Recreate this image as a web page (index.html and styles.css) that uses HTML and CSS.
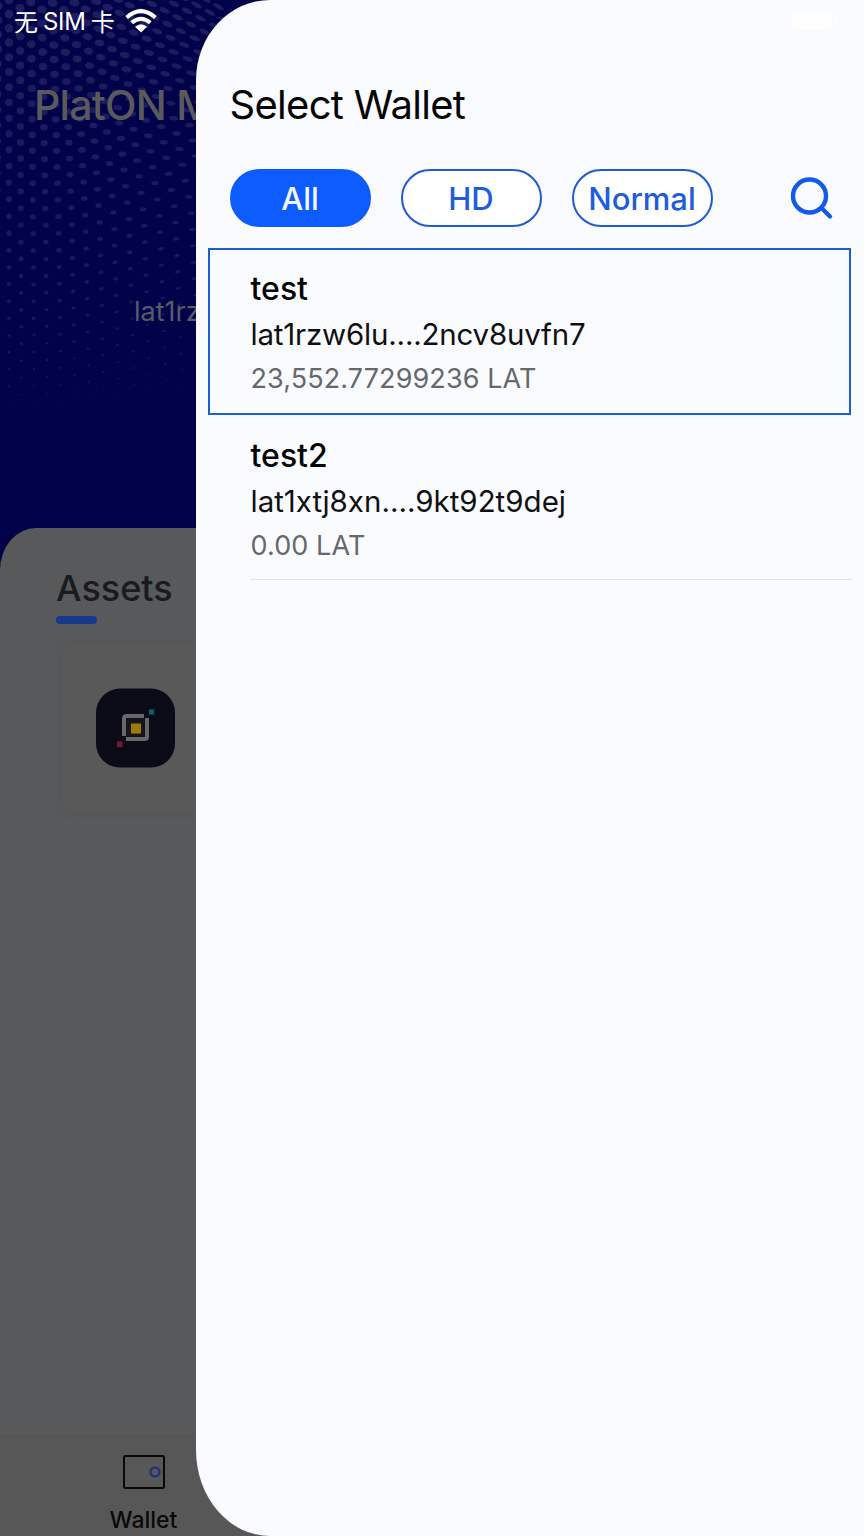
FILE: index.html
```html
<!DOCTYPE html>
<html lang="en">
<head>
<meta charset="utf-8">
<title>Select Wallet</title>
<link rel="stylesheet" href="styles.css">
</head>
<body>
<div class="phone">
  <main class="home">
    <header class="hero">
      <svg class="dots" id="dots" width="300" height="440" viewBox="0 0 300 440"></svg>
      <h1 class="network">PlatON M</h1>
      <p class="address">lat1rz</p>
    </header>
    <section class="assets">
      <h2 class="assets-title">Assets</h2>
      <div class="underline"></div>
      <div class="asset-card">
        <svg width="80" height="80" viewBox="0 0 80 80">
          <rect y=".6" width="79" height="79" rx="24" fill="#0a0b17"/>
          <path d="M28 48V30.500Q28 28 30.500 28H48" fill="none" stroke="#68686c" stroke-width="4"/>
          <path d="M51 30V48.500Q51 51 48.500 51H30" fill="none" stroke="#68686c" stroke-width="4"/>
          <rect x="30.500" y="30.500" width="18" height="18" fill="#171618"/>
          <rect x="35" y="35.500" width="10" height="10" fill="#9c7a0d"/>
          <rect x="53" y="21.500" width="5" height="5" fill="#08656e"/>
          <rect x="21" y="53.500" width="5.500" height="5.500" fill="#761938"/>
        </svg>
      </div>
    </section>
    <nav class="tabs">
      <div class="tab">
        <svg width="42" height="34" viewBox="0 0 42 34" fill="none">
          <rect x="1" y="1" width="40" height="32" rx="1.500" stroke="#080808" stroke-width="2"/>
          <circle cx="32" cy="17" r="4.500" stroke="#202c83" stroke-width="2.200"/>
        </svg>
        <span>Wallet</span>
      </div>
    </nav>
  </main>

  <aside class="drawer">
    <h2 class="title">Select Wallet</h2>
    <div class="filters">
      <button class="pill active">All</button>
      <button class="pill">HD</button>
      <button class="pill normal">Normal</button>
      <svg class="search" width="44" height="44" viewBox="0 0 44 44" fill="none" stroke="#1459e8" stroke-width="4.400" stroke-linecap="round">
        <circle cx="19.500" cy="20" r="16.500"/>
        <path d="M31.500 32L40 40.500"/>
      </svg>
    </div>
    <article class="wallet selected">
      <h3>test</h3>
      <p class="addr">lat1rzw6lu....2ncv8uvfn7</p>
      <p class="balance">23,552.77299236 LAT</p>
    </article>
    <article class="wallet">
      <h3>test2</h3>
      <p class="addr second">lat1xtj8xn....9kt92t9dej</p>
      <p class="balance">0.00 LAT</p>
    </article>
  </aside>

  <div class="status">
    <span class="carrier"><span class="cjk">无</span><span class="sim">SIM</span><span class="cjk">卡</span></span>
    <svg class="wifi" width="32" height="24" viewBox="0 0 32 24" fill="none" stroke="#fff" stroke-width="4">
      <path d="M1.600 8.400Q16-4.200 30.400 8.400"/>
      <path d="M6.700 13.800Q16 5.800 25.300 13.800"/>
      <path d="M10 17.800Q16 12.800 22 17.800L16 23.500Z" fill="#fff" stroke="none"/>
    </svg>
    <svg class="battery" width="46" height="18" viewBox="0 0 46 18" fill="#fff">
      <rect width="40" height="18" rx="5"/>
      <rect x="42" y="6" width="3" height="6" rx="1.500"/>
    </svg>
  </div>
</div>
<script src="dots.js"></script>
</body>
</html>
```

FILE: styles.css
```css
* { box-sizing: border-box; }
body { margin: 0; font-family: Inter, "Liberation Sans", sans-serif; }
h1, h2, h3, p { margin: 0; font-weight: 400; white-space: nowrap; }

.phone { position: relative; width: 864px; height: 1536px; overflow: hidden; background: #02024b; }

.home { display: flex; flex-direction: column; height: 100%; }
.hero { position: relative; height: 528px; padding: 80px 0 0 34px; }
.dots { position: absolute; left: 0; top: 0; }
.network { position: relative; font-size: 41px; line-height: 50px; color: #5a5a5c; font-weight: 500; letter-spacing: -0.7px; }
.address { position: relative; margin: 166px 0 0 100px; font-size: 27px; line-height: 32px; color: #5a5b66; }

.assets { flex: 1; padding: 38px 0 0 56px; background: #58595b; border-top-left-radius: 36px 42px; }
.assets-title { font-size: 36px; line-height: 44px; font-weight: 500; color: #1a1b1e; }
.underline { width: 41px; height: 8px; margin-top: 6px; border-radius: 4px; background: #16388d; }
.asset-card { height: 168px; margin: 20px 0 0 6px; padding: 44px 34px; border-radius: 10px; background: #595959; box-shadow: 0 1px 7px rgba(70, 75, 85, .3); }
.asset-card svg { display: block; }

.tabs { height: 101px; padding: 19px 0 0 108px; background: #575757; border-top: 1px solid #545455; }
.tab { display: flex; flex-direction: column; align-items: center; width: 71px; font-size: 23px; line-height: 28px; font-weight: 500; color: #090909; gap: 17px; }

.drawer { position: absolute; left: 196px; top: 0; width: 668px; height: 1536px; background: #fafbff; border-radius: 74px 0 0 74px / 80px 0 0 86px; padding: 80px 13px 0 12px; }
.title { padding-left: 21.500px; font-size: 40px; line-height: 50px; color: #050505; letter-spacing: -0.7px; }
.filters { display: flex; align-items: center; gap: 30px; padding-left: 21.500px; margin-top: 39px; }
.pill { width: 141px; height: 58px; padding: 0; border: 2px solid #205bd3; border-radius: 29px; background: #fff; color: #205cdc; font: 500 31px Inter, sans-serif; white-space: nowrap; }
.pill.active { border-color: #0c5cff; background: #0c5cff; color: #f3f7ff; }
.search { margin-left: 47px; }
.wallet { height: 167px; padding: 25px 0 0 42.500px; }
.wallet.selected { margin-top: 21px; border: 2px solid #1c5dcf; padding: 23px 0 0 40.500px; }
.wallet:last-child::after { content: ""; display: block; height: 1px; margin: 17px -1px 0 -1px; background: #e2e3e8; }
.wallet h3 { font-size: 32px; line-height: 32px; font-weight: 500; color: #060606; }
.addr { margin-top: 13px; font-size: 29.500px; line-height: 32px; color: #101012; letter-spacing: -0.2px; }
.addr.second { letter-spacing: 0; }
.balance { margin-top: 13px; font-size: 27px; line-height: 32px; color: #67686c; letter-spacing: 0.1px; }

.status { position: absolute; left: 14px; right: 26px; top: 6px; height: 30px; display: flex; align-items: center; color: #fff; }
.carrier { display: flex; align-items: center; font-size: 24px; line-height: 30px; padding-top: 2px; }
.cjk { font-family: "Noto Sans CJK SC", sans-serif; font-size: 24px; position: relative; top: -1px; }
.sim { margin: 0 5px 0 5px; letter-spacing: -0.3px; }
.wifi { margin: 0 0 0 10px; }
.battery { margin-left: auto; opacity: .8; }
```

FILE: dots.js
```js
// Halftone mesh: staggered columns that fan out and fade toward the bottom.
const mesh = document.getElementById('dots');
const shapes = [];
for (let i = -1; i < 20; i++) {
  let y = i % 2 ? -7 : 0;
  while (y < 405) {
    const depth = Math.max(0, y / 400);
    const x = 9 + i * (10.9 + depth * 1.4) + i * i * 0.18 * Math.min(1, depth * 1.8);
    const lift = -i * 1.2 * depth + Math.sin(i / 3) * 3;
    const size = 4.5 * Math.pow(Math.max(0, 1 - y / 425), 0.65);
    const tilt = i * (1.8 - depth * 4);
    const alpha = 1 - depth * 0.3;
    const cy = y + lift;
    const rx = size * (1 + i * 0.018);
    const ry = size * (1 - Math.max(0, i) * 0.028);
    shapes.push(`<ellipse cx="${x.toFixed(1)}" cy="${cy.toFixed(1)}" rx="${rx.toFixed(2)}" ry="${ry.toFixed(2)}" transform="rotate(${tilt.toFixed(1)} ${x.toFixed(1)} ${cy.toFixed(1)})" opacity="${alpha.toFixed(2)}"/>`);
    y += 14 + 3 * Math.min(1, depth * 2);
  }
}
mesh.innerHTML = `<g fill="#1e1e5e">${shapes.join('')}</g>`;
```
